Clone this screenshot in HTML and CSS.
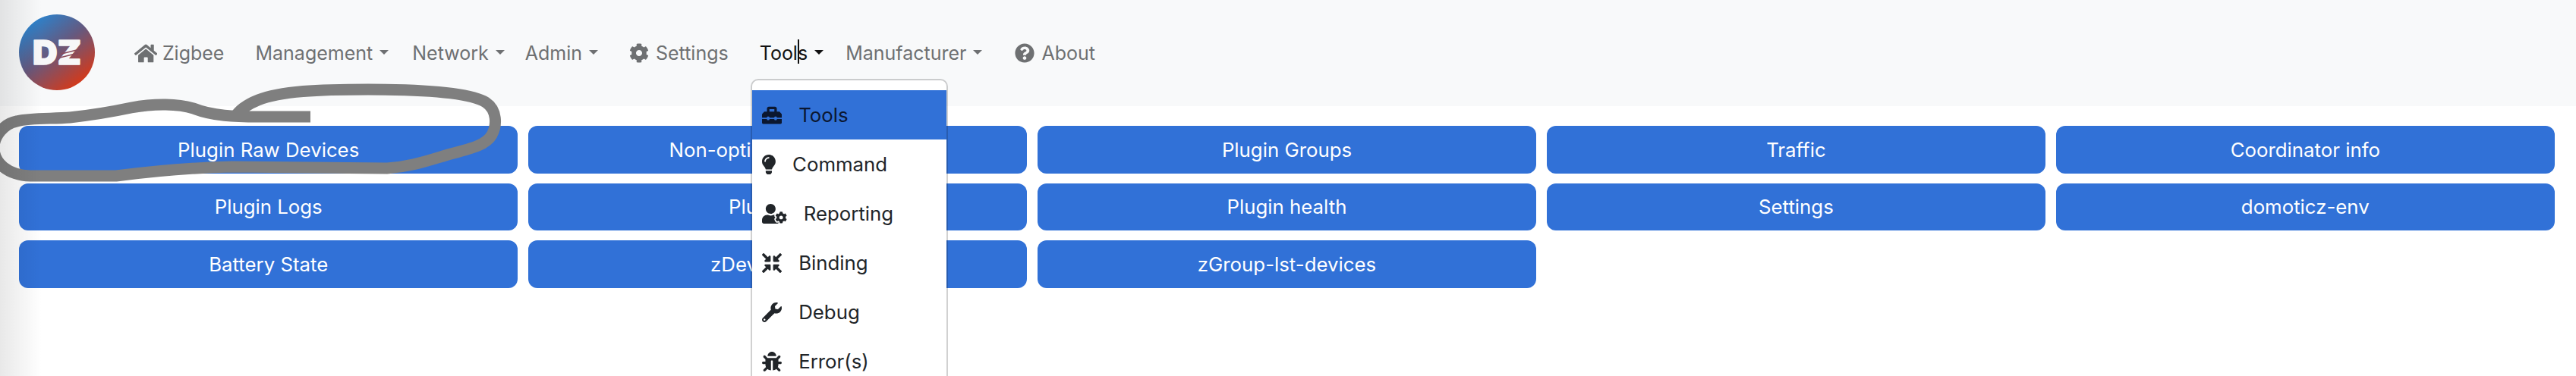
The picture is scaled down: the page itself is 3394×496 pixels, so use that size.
FILE: index.html
```html
<!DOCTYPE html>
<html lang="en">
<head>
<meta charset="utf-8">
<title>Zigbee</title>
<link rel="stylesheet" href="styles.css">
</head>
<body>
<header class="navbar">
  <svg class="logo" viewBox="0 0 100 100" aria-label="DZ">
    <defs>
      <linearGradient id="logoGrad" x1="0.2" y1="0.1" x2="0.8" y2="0.9">
        <stop offset="0" stop-color="#2f80c8"/>
        <stop offset="0.45" stop-color="#65597f"/>
        <stop offset="1" stop-color="#d23a1c"/>
      </linearGradient>
    </defs>
    <circle cx="50" cy="50" r="50" fill="url(#logoGrad)"/>
    <text class="logo-text" x="50" y="65.5" text-anchor="middle" textLength="64" lengthAdjust="spacingAndGlyphs">DZ</text>
    <line class="logo-cut" x1="56" y1="52" x2="80" y2="46"/>
    <line class="logo-cut" x1="54" y1="57" x2="78" y2="51"/>
  </svg>
  <nav class="nav">
    <a class="nav-link extra first"><svg class="ico home" viewBox="0 0 576 512"><path d="M280.37 148.26L96 300.11V464a16 16 0 0 0 16 16l112.06-.29a16 16 0 0 0 15.92-16V368a16 16 0 0 1 16-16h64a16 16 0 0 1 16 16v95.64a16 16 0 0 0 16 16.05L464 480a16 16 0 0 0 16-16V300L295.67 148.26a12.19 12.19 0 0 0-15.3 0zM571.6 251.47L488 182.56V44.05a12 12 0 0 0-12-12h-56a12 12 0 0 0-12 12v72.61L318.47 43a48 48 0 0 0-61 0L4.34 251.47a12 12 0 0 0-1.6 16.9l25.5 31A12 12 0 0 0 45.15 301l235.22-193.74a12.19 12.19 0 0 1 15.3 0L530.9 301a12 12 0 0 0 16.9-1.6l25.5-31a12 12 0 0 0-1.7-16.93z"/></svg>Zigbee</a>
    <a class="nav-link extra caret pad-lg">Management</a>
    <a class="nav-link caret">Network</a>
    <a class="nav-link caret">Admin</a>
    <a class="nav-link extra"><svg class="ico" viewBox="0 0 512 512"><path d="M487.4 315.7l-42.6-24.6c4.3-23.2 4.3-47 0-70.2l42.6-24.6c4.9-2.8 7.1-8.6 5.5-14-11.1-35.6-30-67.8-54.7-94.6-3.8-4.1-10-5.1-14.8-2.3L380.8 110c-17.9-15.4-38.5-27.3-60.8-35.1V25.8c0-5.6-3.9-10.5-9.4-11.7-36.7-8.2-74.3-7.8-109.2 0-5.5 1.2-9.4 6.1-9.4 11.7V75c-22.2 7.9-42.8 19.8-60.8 35.1L88.7 85.5c-4.9-2.8-11-1.9-14.8 2.3-24.7 26.7-43.6 58.9-54.7 94.6-1.7 5.4.6 11.2 5.5 14L67.3 221c-4.3 23.2-4.3 47 0 70.2l-42.6 24.6c-4.9 2.8-7.1 8.6-5.5 14 11.1 35.6 30 67.8 54.7 94.6 3.8 4.1 10 5.1 14.8 2.3l42.6-24.6c17.9 15.4 38.5 27.3 60.8 35.1v49.2c0 5.6 3.9 10.5 9.4 11.7 36.7 8.2 74.3 7.8 109.2 0 5.5-1.2 9.4-6.1 9.4-11.7v-49.2c22.2-7.9 42.8-19.8 60.8-35.1l42.6 24.6c4.9 2.8 11 1.9 14.8-2.3 24.7-26.7 43.6-58.9 54.7-94.6 1.5-5.5-.7-11.3-5.6-14.1zM256 336c-44.1 0-80-35.9-80-80s35.9-80 80-80 80 35.9 80 80-35.9 80-80 80z"/></svg>Settings</a>
    <div class="nav-item extra">
      <a class="nav-link caret active pad-md"><span class="typed">Tools</span></a>
      <ul class="menu">
        <li class="menu-item current"><svg class="ico" viewBox="0 0 512 512"><path d="M502.63 214.63l-45.25-45.25c-6-6-14.14-9.37-22.63-9.37H384V80c0-26.51-21.49-48-48-48H176c-26.51 0-48 21.49-48 48v80H77.25c-8.49 0-16.62 3.37-22.63 9.37L9.37 214.63c-6 6-9.37 14.14-9.37 22.63V320h128v-16c0-8.84 7.16-16 16-16h32c8.84 0 16 7.16 16 16v16h128v-16c0-8.84 7.16-16 16-16h32c8.84 0 16 7.16 16 16v16h128v-82.75c0-8.48-3.37-16.62-9.37-22.62zM320 160H192V96h128v64zm64 208c0 8.84-7.16 16-16 16h-32c-8.84 0-16-7.16-16-16v-16H192v16c0 8.84-7.16 16-16 16h-32c-8.84 0-16-7.16-16-16v-16H0v96c0 17.67 14.33 32 32 32h448c17.67 0 32-14.33 32-32v-96H384v16z"/></svg>Tools</li>
        <li class="menu-item"><svg class="ico" viewBox="0 0 352 512"><path d="M96.06 454.35c.01 6.29 1.87 12.45 5.36 17.69l17.09 25.69a31.99 31.99 0 0 0 26.64 14.28h61.71a31.99 31.99 0 0 0 26.64-14.28l17.09-25.69a31.989 31.989 0 0 0 5.36-17.69l.04-38.35H96.01l.05 38.35zM0 176c0 44.37 16.45 84.85 43.56 115.78 16.52 18.85 42.36 58.23 52.21 91.45.04.26.07.52.11.78h160.24c.04-.26.07-.51.11-.78 9.85-33.22 35.69-72.6 52.21-91.45C335.55 260.85 352 220.37 352 176 352 78.61 272.91-.3 175.45 0 73.44.31 0 82.97 0 176zm176-80c-44.11 0-80 35.89-80 80 0 8.84-7.16 16-16 16s-16-7.16-16-16c0-61.76 50.24-112 112-112 8.84 0 16 7.16 16 16s-7.16 16-16 16z"/></svg>Command</li>
        <li class="menu-item"><svg class="ico" viewBox="0 0 640 512"><path d="M610.5 373.3c2.6-14.1 2.6-28.5 0-42.6l25.8-14.9c3-1.7 4.3-5.2 3.3-8.5-6.7-21.6-18.2-41.2-33.2-57.4-2.3-2.5-6-3.1-9-1.4l-25.8 14.9c-10.9-9.3-23.4-16.5-36.9-21.3v-29.8c0-3.4-2.4-6.4-5.7-7.1-22.3-5-45-4.8-66.2 0-3.3.7-5.7 3.7-5.7 7.1v29.8c-13.5 4.8-26 12-36.9 21.3l-25.8-14.9c-2.9-1.7-6.7-1.1-9 1.4-15 16.2-26.5 35.8-33.2 57.4-1 3.3.4 6.8 3.3 8.5l25.8 14.9c-2.6 14.1-2.6 28.5 0 42.6l-25.8 14.9c-3 1.7-4.3 5.2-3.3 8.5 6.7 21.6 18.2 41.1 33.2 57.4 2.3 2.5 6 3.1 9 1.4l25.8-14.9c10.9 9.3 23.4 16.5 36.9 21.3v29.8c0 3.4 2.4 6.4 5.7 7.1 22.3 5 45 4.8 66.2 0 3.3-.7 5.7-3.7 5.7-7.1v-29.8c13.5-4.8 26-12 36.9-21.3l25.8 14.9c2.9 1.7 6.7 1.1 9-1.4 15-16.2 26.5-35.8 33.2-57.4 1-3.3-.4-6.8-3.3-8.5l-25.8-14.9zM496 400.5c-26.8 0-48.5-21.8-48.5-48.5s21.8-48.5 48.5-48.5 48.5 21.8 48.5 48.5-21.7 48.5-48.5 48.5zM224 256c70.7 0 128-57.3 128-128S294.7 0 224 0 96 57.3 96 128s57.3 128 128 128zm201.2 226.5c-2.3-1.2-4.6-2.6-6.8-3.9l-7.9 4.6c-6 3.4-12.8 5.3-19.6 5.3-10.9 0-21.4-4.6-28.9-12.6-18.3-19.8-32.3-43.9-40.2-69.6-5.5-17.7 1.9-36.4 17.9-45.7l7.9-4.6c-.1-2.6-.1-5.2 0-7.8l-7.9-4.6c-16-9.2-23.4-28-17.9-45.7.9-2.9 2.2-5.8 3.2-8.7-3.8-.3-7.5-1.2-11.4-1.2h-16.7c-22.2 10.2-46.9 16-72.9 16s-50.6-5.8-72.9-16h-16.7C60.2 288 0 348.2 0 422.4V464c0 26.5 21.5 48 48 48h352c10.1 0 19.5-3.2 27.2-8.5-1.2-3.8-2-7.7-2-11.8v-9.2z"/></svg>Reporting</li>
        <li class="menu-item"><svg class="ico" viewBox="0 0 512 512"><path d="M200 288H88c-21.4 0-32.1 25.8-17 41l32.9 31-99.2 99.3c-6.2 6.2-6.2 16.4 0 22.6l25.4 25.4c6.2 6.2 16.4 6.2 22.6 0L152 408l31.1 33c15.1 15.1 40.9 4.4 40.9-17V312c0-13.3-10.7-24-24-24zm112-64h112c21.4 0 32.1-25.9 17-41l-33-31 99.3-99.3c6.2-6.2 6.2-16.4 0-22.6L481.9 4.7c-6.2-6.2-16.4-6.2-22.6 0L360 104l-31.1-33C313.8 55.9 288 66.6 288 88v112c0 13.3 10.7 24 24 24zm96 136l33-31.1c15.1-15.1 4.4-40.9-17-40.9H312c-13.3 0-24 10.7-24 24v112c0 21.4 25.9 32.1 41 17l31-32.9 99.3 99.3c6.2 6.2 16.4 6.2 22.6 0l25.4-25.4c6.2-6.2 6.2-16.4 0-22.6L408 360zM183 71.1L152 104 52.7 4.7c-6.2-6.2-16.4-6.2-22.6 0L4.7 30.1c-6.2 6.2-6.2 16.4 0 22.6L104 152l-33 31.1C55.9 198.2 66.6 224 88 224h112c13.3 0 24-10.7 24-24V88c0-21.3-25.9-32-41-16.9z"/></svg>Binding</li>
        <li class="menu-item"><svg class="ico" viewBox="0 0 512 512"><path d="M507.73 109.1c-2.24-9.03-13.54-12.09-20.12-5.51l-74.36 74.36-67.88-11.31-11.31-67.88 74.36-74.36c6.62-6.62 3.43-17.9-5.66-20.16-47.38-11.74-99.55.91-136.58 37.93-39.64 39.64-50.55 97.1-34.05 147.2L18.74 402.76c-24.99 24.99-24.99 65.51 0 90.5 24.99 24.99 65.51 24.99 90.5 0l213.21-213.21c50.12 16.71 107.47 5.68 147.37-34.22 37.07-37.07 49.7-89.32 37.91-136.73zM64 472c-13.25 0-24-10.75-24-24 0-13.26 10.75-24 24-24s24 10.74 24 24c0 13.25-10.75 24-24 24z"/></svg>Debug</li>
        <li class="menu-item"><svg class="ico" viewBox="0 0 512 512"><path d="M511.988 288.9c-.478 17.43-15.217 31.1-32.653 31.1H424v16c0 21.864-4.882 42.584-13.6 61.145l60.228 60.228c12.496 12.497 12.496 32.758 0 45.255-12.498 12.497-32.759 12.496-45.256 0l-54.736-54.736C345.886 467.965 314.351 480 280 480V236c0-6.627-5.373-12-12-12h-24c-6.627 0-12 5.373-12 12v244c-34.351 0-65.886-12.035-90.636-32.108l-54.736 54.736c-12.498 12.497-32.759 12.496-45.256 0-12.496-12.497-12.496-32.758 0-45.255l60.228-60.228C92.882 378.584 88 357.864 88 336v-16H32.666C15.23 320 .491 306.33.013 288.9-.484 270.816 14.028 256 32 256h56v-58.745l-46.628-46.628c-12.496-12.497-12.496-32.758 0-45.255 12.498-12.497 32.758-12.497 45.256 0L141.255 160h229.489l54.627-54.627c12.498-12.497 32.758-12.497 45.256 0 12.496 12.497 12.496 32.758 0 45.255L424 197.255V256h56c17.972 0 32.484 14.816 31.988 32.9zM257 0c-61.856 0-112 50.144-112 112h224C369 50.144 318.856 0 257 0z"/></svg>Error(s)</li>
      </ul>
    </div>
    <a class="nav-link caret pad-md">Manufacturer</a>
    <a class="nav-link extra"><svg class="ico" viewBox="0 0 512 512"><path d="M504 256c0 136.997-111.043 248-248 248S8 392.997 8 256C8 119.083 119.043 8 256 8s248 111.083 248 248zM262.655 90c-54.497 0-89.255 22.957-116.549 63.758-3.536 5.286-2.353 12.415 2.715 16.258l34.699 26.31c5.205 3.947 12.621 3.008 16.665-2.122 17.864-22.658 30.113-35.797 57.303-35.797 20.429 0 45.698 13.148 45.698 32.958 0 14.976-12.363 22.667-32.534 33.976C247.128 238.528 216 254.941 216 296v4c0 6.627 5.373 12 12 12h56c6.627 0 12-5.373 12-12v-1.333c0-28.462 83.186-29.647 83.186-106.667 0-58.002-60.165-102-116.531-102zM256 338c-25.365 0-46 20.635-46 46 0 25.364 20.635 46 46 46s46-20.636 46-46c0-25.365-20.635-46-46-46z"/></svg>About</a>
  </nav>
</header>
<main class="grid">
  <a class="btn">Plugin Raw Devices</a>
  <a class="btn">Non-optimized Devices</a>
  <a class="btn">Plugin Groups</a>
  <a class="btn">Traffic</a>
  <a class="btn">Coordinator info</a>
  <a class="btn">Plugin Logs</a>
  <a class="btn">Plugin Info</a>
  <a class="btn">Plugin health</a>
  <a class="btn">Settings</a>
  <a class="btn">domoticz-env</a>
  <a class="btn">Battery State</a>
  <a class="btn">zDevice-name</a>
  <a class="btn">zGroup-lst-devices</a>
</main>
<svg class="scribble" viewBox="0 0 700 240" aria-hidden="true">
  <path d="M409 154 L340 154 C310 154 280 153 255 143 C235 137 205 136 173 142 C140 149 110 153 92 155 C70 157 40 155 22 160 C5 163 -8 180 -8 195 C-8 215 10 231 40 232 L153 232 C200 226 250 221 306 220 L510 222 C540 220 560 213 587 205 C620 196 640 192 648 178 C655 165 655 145 640 135 C620 122 560 118 485 118 C420 118 370 120 340 132 C325 138 315 145 309 155"/>
</svg>
<div class="edge-shade"></div>
</body>
</html>
```
FILE: styles.css
```css
* { box-sizing: border-box; }
html, body { margin: 0; height: 100%; }
body {
  position: relative;
  height: 496px;
  overflow: hidden;
  background: #fff;
  font-family: Inter, "Liberation Sans", sans-serif;
  font-size: 25px;
  color: #212529;
}
.navbar {
  display: flex;
  align-items: center;
  height: 140px;
  padding-left: 25px;
  background: #f8f9fa;
}
.logo { width: 100px; height: 100px; flex: none; margin-top: -2px; }
.logo-text {
  font-family: Inter, "Liberation Sans", sans-serif;
  font-weight: 900;
  font-size: 44px;
  fill: #f7f7f8;
  stroke: #f7f7f8;
  stroke-width: 1.5px;
  stroke-linejoin: round;
}
.logo-cut { stroke: #8a4a5a; stroke-width: 1.5px; }
.nav { display: flex; align-items: center; margin-left: 38px; }
.nav-link {
  display: flex;
  align-items: center;
  padding: 0 13.5px;
  color: #6e7072;
  white-space: nowrap;
}
.pad-lg { padding-right: 17.5px; }
.pad-md { padding-right: 15.5px; }
.extra { margin-left: 14px; }
.first { margin-left: 0; }
.nav-item { position: relative; }
.active { color: #111; }
.caret::after {
  content: "";
  margin-left: 9px;
  margin-top: -2px;
  border-top: 6.5px solid currentColor;
  border-left: 6.5px solid transparent;
  border-right: 6.5px solid transparent;
}
.typed { position: relative; }
.typed::after {
  content: "";
  position: absolute;
  left: 50px;
  top: -3px;
  width: 2px;
  height: 32px;
  background: #111;
}
.ico {
  height: 26px;
  width: auto;
  flex: none;
  fill: currentColor;
  margin-right: 9px;
}
.home { height: 27px; margin-right: 7px; }
.menu {
  position: absolute;
  top: 49px;
  left: 2px;
  width: 260px;
  margin: 0;
  padding: 13px 0 0;
  list-style: none;
  background: #fff;
  background-clip: padding-box;
  border: 2px solid rgba(0, 0, 0, .18);
  border-radius: 10px;
  color: #212529;
  font-size: 25.8px;
  z-index: 2;
}
.menu-item {
  display: flex;
  align-items: center;
  height: 65px;
  padding-left: 13px;
}
.menu-item .ico { margin-right: 22px; }
.current { background: #3171d7; color: #0b1730; }
.grid {
  display: grid;
  grid-template-columns: repeat(5, 1fr);
  gap: 13px 13.5px;
  padding: 26px 28px 0 25px;
}
.btn {
  display: flex;
  align-items: center;
  justify-content: center;
  height: 62.5px;
  border-radius: 12px;
  background: #3171d7;
  color: #fff;
  font-size: 25.8px;
}
.scribble {
  position: absolute;
  left: 0;
  top: 0;
  width: 700px;
  height: 240px;
  overflow: hidden;
}
.scribble path {
  fill: none;
  stroke: #7f7f7f;
  stroke-width: 15px;
}
.edge-shade {
  position: absolute;
  left: 0;
  top: 0;
  bottom: 0;
  width: 55px;
  background: linear-gradient(to right, rgba(0, 0, 0, .09), transparent);
  pointer-events: none;
}
```
